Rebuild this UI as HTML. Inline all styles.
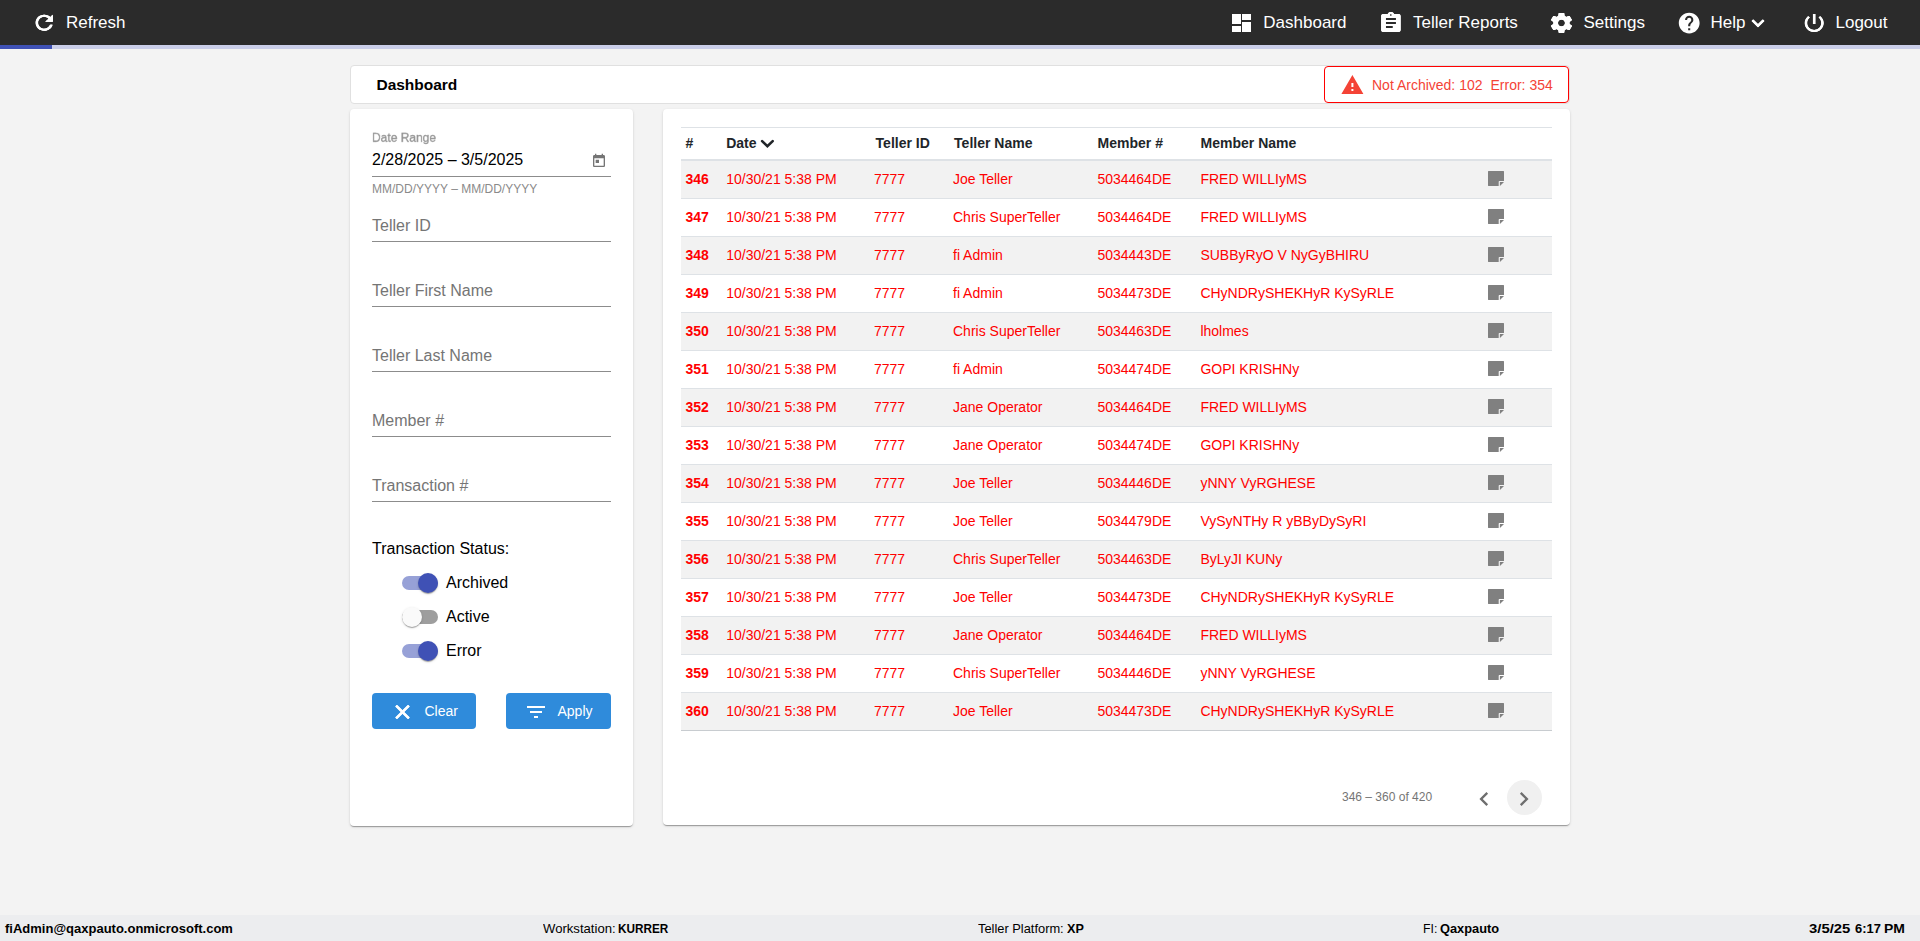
<!DOCTYPE html>
<html>
<head>
<meta charset="utf-8">
<title>Dashboard</title>
<style>
*{box-sizing:border-box;margin:0;padding:0}
html,body{width:1920px;height:941px;overflow:hidden;background:#f3f3f3;font-family:"Liberation Sans",sans-serif;color:#000}
.abs{position:absolute}
.t{position:absolute;white-space:nowrap;line-height:1}
#topbar{left:0;top:0;width:1920px;height:45px;background:#2b2b2b}
#prog{left:0;top:45px;width:1920px;height:4px;background:#cacee9}
#prog i{display:block;width:52px;height:4px;background:#3f51b5}
.nv{color:#fff;font-size:17px;top:14px}
#titlecard{left:350px;top:65px;width:1220px;height:39px;background:#fff;border:1px solid #e0e0e0;border-radius:4px}
#alert{left:1324px;top:66px;width:245px;height:37px;border:1px solid #f00;border-radius:4px;background:#fff}
.card{background:#fff;border-radius:4px;box-shadow:0 2px 1px -1px rgba(0,0,0,.2),0 1px 1px 0 rgba(0,0,0,.14),0 1px 3px 0 rgba(0,0,0,.12)}
#left{left:350px;top:109px;width:283px;height:717px}
#right{left:663px;top:109px;width:907px;height:716px}
.ul{position:absolute;left:372px;width:239px;height:1px;background:#8c8c8c}
.ph{color:#757575;font-size:16px;left:372px}
.trk{position:absolute;left:402px;width:36px;height:14px;border-radius:7px}
.thm{position:absolute;width:20px;height:20px;border-radius:50%;box-shadow:0 2px 1px -1px rgba(0,0,0,.2),0 1px 1px 0 rgba(0,0,0,.14),0 1px 3px 0 rgba(0,0,0,.12)}
.sl{font-size:16px;left:446px;color:#000}
.btn{position:absolute;top:693px;height:36px;border-radius:4px;background:#2f8bdb}
.bt{color:#fff;font-size:14px;top:704px}
.hl{position:absolute;left:681px;width:871px;background:#dee2e6}
.rb{position:absolute;left:681px;width:871px;height:37px;background:#f2f2f2}
.th{font-weight:bold;font-size:14px;color:#212529;top:136px}
.td{font-size:14px;color:#f00}
.td b{font-weight:bold}
#footer{left:0;top:915px;width:1920px;height:26px;background:#ecedef}
.ft{font-size:13px;top:922px;color:#000}
.ft b{font-weight:bold}
</style>
</head>
<body>
<div id="topbar" class="abs"></div>
<div id="prog" class="abs"><i></i></div>

<svg class="abs" style="left:31px;top:10px;overflow:visible" width="25.44" height="24" viewBox="0 0 24 24" preserveAspectRatio="none" fill="#fff"><g transform="translate(0.5 0.85)"><path d="M17.65 6.35C16.2 4.9 14.21 4 12 4c-4.42 0-7.99 3.58-7.99 8s3.57 8 7.99 8c3.73 0 6.84-2.55 7.73-6h-2.08c-.82 2.33-3.04 4-5.65 4-3.31 0-6-2.69-6-6s2.69-6 6-6c1.66 0 3.14.69 4.22 1.78L13 11h7V4l-2.35 2.35z"/><path transform="translate(-0.25 0)" d="M17.65 6.35C16.2 4.9 14.21 4 12 4c-4.42 0-7.99 3.58-7.99 8s3.57 8 7.99 8c3.73 0 6.84-2.55 7.73-6h-2.08c-.82 2.33-3.04 4-5.65 4-3.31 0-6-2.69-6-6s2.69-6 6-6c1.66 0 3.14.69 4.22 1.78L13 11h7V4l-2.35 2.35z"/><path transform="translate(0.25 0)" d="M17.65 6.35C16.2 4.9 14.21 4 12 4c-4.42 0-7.99 3.58-7.99 8s3.57 8 7.99 8c3.73 0 6.84-2.55 7.73-6h-2.08c-.82 2.33-3.04 4-5.65 4-3.31 0-6-2.69-6-6s2.69-6 6-6c1.66 0 3.14.69 4.22 1.78L13 11h7V4l-2.35 2.35z"/></g></svg>
<span class="t nv" style="left:66px">Refresh</span>
<svg class="abs" style="left:1229px;top:11px;overflow:visible" width="24" height="24" viewBox="0 0 24 24" fill="#fff"><g transform="translate(0.5 0.0)"><path d="M3 13h8V3H3v10zm0 8h8v-6H3v6zm10 0h8V11h-8v10zm0-18v6h8V3h-8z"/><path transform="translate(-0.5 0)" d="M3 13h8V3H3v10zm0 8h8v-6H3v6zm10 0h8V11h-8v10zm0-18v6h8V3h-8z"/><path transform="translate(0.5 0)" d="M3 13h8V3H3v10zm0 8h8v-6H3v6zm10 0h8V11h-8v10zm0-18v6h8V3h-8z"/></g></svg>
<span class="t nv" style="left:1263.3px">Dashboard</span>
<svg class="abs" style="left:1378px;top:10px;overflow:visible" width="25.44" height="24" viewBox="0 0 24 24" preserveAspectRatio="none" fill="#fff"><g transform="translate(0.17 0.95)"><path d="M19 3h-4.18C14.4 1.84 13.3 1 12 1c-1.3 0-2.4.84-2.82 2H5c-1.1 0-2 .9-2 2v14c0 1.1.9 2 2 2h14c1.1 0 2-.9 2-2V5c0-1.1-.9-2-2-2zm-7 0c.55 0 1 .45 1 1s-.45 1-1 1-1-.45-1-1 .45-1 1-1zm2 14H7v-2h7v2zm3-4H7v-2h10v2zm0-4H7V7h10v2z"/><path transform="translate(-0.25 0)" d="M19 3h-4.18C14.4 1.84 13.3 1 12 1c-1.3 0-2.4.84-2.82 2H5c-1.1 0-2 .9-2 2v14c0 1.1.9 2 2 2h14c1.1 0 2-.9 2-2V5c0-1.1-.9-2-2-2zm-7 0c.55 0 1 .45 1 1s-.45 1-1 1-1-.45-1-1 .45-1 1-1zm2 14H7v-2h7v2zm3-4H7v-2h10v2zm0-4H7V7h10v2z"/><path transform="translate(0.25 0)" d="M19 3h-4.18C14.4 1.84 13.3 1 12 1c-1.3 0-2.4.84-2.82 2H5c-1.1 0-2 .9-2 2v14c0 1.1.9 2 2 2h14c1.1 0 2-.9 2-2V5c0-1.1-.9-2-2-2zm-7 0c.55 0 1 .45 1 1s-.45 1-1 1-1-.45-1-1 .45-1 1-1zm2 14H7v-2h7v2zm3-4H7v-2h10v2zm0-4H7V7h10v2z"/></g></svg>
<span class="t nv" style="left:1413px">Teller Reports</span>
<svg class="abs" style="left:1548px;top:10px;overflow:visible" width="25.44" height="24" viewBox="0 0 24 24" preserveAspectRatio="none" fill="#fff"><g transform="translate(0.698 0.95)"><path d="M19.43 12.98c.04-.32.07-.64.07-.98s-.03-.66-.07-.98l2.11-1.65c.19-.15.24-.42.12-.64l-2-3.46c-.12-.22-.39-.3-.61-.22l-2.49 1c-.52-.4-1.08-.73-1.69-.98l-.38-2.65C14.46 2.18 14.25 2 14 2h-4c-.25 0-.46.18-.49.42l-.38 2.65c-.61.25-1.17.59-1.69.98l-2.49-1c-.23-.09-.49 0-.61.22l-2 3.46c-.13.22-.07.49.12.64l2.11 1.65c-.04.32-.07.65-.07.98s.03.66.07.98l-2.11 1.65c-.19.15-.24.42-.12.64l2 3.46c.12.22.39.3.61.22l2.49-1c.52.4 1.08.73 1.69.98l.38 2.65c.03.24.24.42.49.42h4c.25 0 .46-.18.49-.42l.38-2.65c.61-.25 1.17-.59 1.69-.98l2.49 1c.23.09.49 0 .61-.22l2-3.46c.12-.22.07-.49-.12-.64l-2.11-1.65zM12 15.5c-1.93 0-3.5-1.57-3.5-3.5s1.57-3.5 3.5-3.5 3.5 1.57 3.5 3.5-1.57 3.5-3.5 3.5z"/><path transform="translate(-0.25 0)" d="M19.43 12.98c.04-.32.07-.64.07-.98s-.03-.66-.07-.98l2.11-1.65c.19-.15.24-.42.12-.64l-2-3.46c-.12-.22-.39-.3-.61-.22l-2.49 1c-.52-.4-1.08-.73-1.69-.98l-.38-2.65C14.46 2.18 14.25 2 14 2h-4c-.25 0-.46.18-.49.42l-.38 2.65c-.61.25-1.17.59-1.69.98l-2.49-1c-.23-.09-.49 0-.61.22l-2 3.46c-.13.22-.07.49.12.64l2.11 1.65c-.04.32-.07.65-.07.98s.03.66.07.98l-2.11 1.65c-.19.15-.24.42-.12.64l2 3.46c.12.22.39.3.61.22l2.49-1c.52.4 1.08.73 1.69.98l.38 2.65c.03.24.24.42.49.42h4c.25 0 .46-.18.49-.42l.38-2.65c.61-.25 1.17-.59 1.69-.98l2.49 1c.23.09.49 0 .61-.22l2-3.46c.12-.22.07-.49-.12-.64l-2.11-1.65zM12 15.5c-1.93 0-3.5-1.57-3.5-3.5s1.57-3.5 3.5-3.5 3.5 1.57 3.5 3.5-1.57 3.5-3.5 3.5z"/><path transform="translate(0.25 0)" d="M19.43 12.98c.04-.32.07-.64.07-.98s-.03-.66-.07-.98l2.11-1.65c.19-.15.24-.42.12-.64l-2-3.46c-.12-.22-.39-.3-.61-.22l-2.49 1c-.52-.4-1.08-.73-1.69-.98l-.38-2.65C14.46 2.18 14.25 2 14 2h-4c-.25 0-.46.18-.49.42l-.38 2.65c-.61.25-1.17.59-1.69.98l-2.49-1c-.23-.09-.49 0-.61.22l-2 3.46c-.13.22-.07.49.12.64l2.11 1.65c-.04.32-.07.65-.07.98s.03.66.07.98l-2.11 1.65c-.19.15-.24.42-.12.64l2 3.46c.12.22.39.3.61.22l2.49-1c.52.4 1.08.73 1.69.98l.38 2.65c.03.24.24.42.49.42h4c.25 0 .46-.18.49-.42l.38-2.65c.61-.25 1.17-.59 1.69-.98l2.49 1c.23.09.49 0 .61-.22l2-3.46c.12-.22.07-.49-.12-.64l-2.11-1.65zM12 15.5c-1.93 0-3.5-1.57-3.5-3.5s1.57-3.5 3.5-3.5 3.5 1.57 3.5 3.5-1.57 3.5-3.5 3.5z"/></g></svg>
<span class="t nv" style="left:1583.5px">Settings</span>
<svg class="abs" style="left:1676px;top:10px;overflow:visible" width="25" height="25" viewBox="0 0 24 24" fill="#fff"><g transform="translate(0.672 0.528)"><path d="M12 2C6.48 2 2 6.48 2 12s4.48 10 10 10 10-4.48 10-10S17.52 2 12 2zm1 17h-2v-2h2v2zm2.07-7.75l-.9.92C13.45 12.9 13 13.5 13 15h-2v-.5c0-1.1.45-2.1 1.17-2.83l1.24-1.26c.37-.36.59-.86.59-1.41 0-1.1-.9-2-2-2s-2 .9-2 2H8c0-2.21 1.79-4 4-4s4 1.79 4 4c0 .88-.36 1.68-.93 2.25z"/></g></svg>
<span class="t nv" style="left:1710.5px">Help</span>
<svg class="abs" style="left:1801px;top:11px;overflow:visible" width="24.72" height="24" viewBox="0 0 24 24" preserveAspectRatio="none" fill="#fff"><g transform="translate(0.816 0.0)"><path d="M13 3h-2v10h2V3zm4.83 2.170l-1.42 1.42C17.99 7.86 19 9.81 19 12c0 3.87-3.13 7-7 7s-7-3.13-7-7c0-2.190 1.010-4.140 2.580-5.420L6.170 5.170C4.230 6.820 3 9.260 3 12c0 4.970 4.030 9 9 9s9-4.030 9-9c0-2.740-1.230-5.180-3.170-6.830z"/><path transform="translate(-0.25 0)" d="M13 3h-2v10h2V3zm4.83 2.170l-1.42 1.42C17.99 7.86 19 9.81 19 12c0 3.87-3.13 7-7 7s-7-3.13-7-7c0-2.190 1.010-4.140 2.580-5.420L6.170 5.170C4.230 6.820 3 9.260 3 12c0 4.970 4.030 9 9 9s9-4.030 9-9c0-2.740-1.230-5.180-3.170-6.830z"/><path transform="translate(0.25 0)" d="M13 3h-2v10h2V3zm4.83 2.170l-1.42 1.42C17.99 7.86 19 9.81 19 12c0 3.87-3.13 7-7 7s-7-3.13-7-7c0-2.190 1.010-4.140 2.580-5.420L6.170 5.170C4.230 6.820 3 9.260 3 12c0 4.970 4.030 9 9 9s9-4.030 9-9c0-2.740-1.230-5.180-3.170-6.830z"/></g></svg>
<span class="t nv" style="left:1835.5px">Logout</span>
<svg class="abs" style="left:1745px;top:10px;overflow:visible" width="25" height="25" viewBox="0 0 24 24" fill="#fff"><g transform="translate(0.48 0.48)"><path d="M7.41 8.59L12 13.17l4.590-4.580L18 10l-6 6-6-6 1.410-1.410z"/><path transform="translate(-0.25 0)" d="M7.41 8.59L12 13.17l4.590-4.580L18 10l-6 6-6-6 1.410-1.410z"/><path transform="translate(0.25 0)" d="M7.41 8.59L12 13.17l4.590-4.580L18 10l-6 6-6-6 1.410-1.410z"/></g></svg>
<div id="titlecard" class="abs"></div>
<span class="t" style="left:376.5px;top:77.3px;font-size:15.5px;font-weight:bold;letter-spacing:-0.02px">Dashboard</span>
<div id="alert" class="abs"></div>
<svg class="abs" style="left:1340px;top:73px;overflow:visible" width="24" height="24" viewBox="0 0 24 24" fill="#f44336"><g transform="translate(0.4 0.0)"><path d="M1 21h22L12 2 1 21zm12-3h-2v-2h2v2zm0-4h-2v-4h2v4z"/></g></svg>
<span class="t" style="left:1372px;top:78px;font-size:14px;color:#f44336">Not Archived: 102</span>
<span class="t" style="left:1490.5px;top:78px;font-size:14px;color:#f44336">Error: 354</span>
<div id="left" class="abs card"></div>
<div id="right" class="abs card"></div>
<span class="t" style="left:372px;top:132.4px;font-size:16px;color:#939393;transform-origin:0 0;transform:scale(.75);will-change:transform;-webkit-text-stroke:.35px #939393">Date Range</span>
<span class="t" style="left:372px;top:152px;font-size:16px;color:#000">2/28/2025 – 3/5/2025</span>
<svg class="abs" style="left:591px;top:153px;overflow:visible" width="16" height="16" viewBox="0 0 24 24" fill="#757575"><g><path d="M19 3h-1V1h-2v2H8V1H6v2H5c-1.110 0-1.990.9-1.990 2L3 19c0 1.100.890 2 2 2h14c1.100 0 2-.9 2-2V5c0-1.100-.9-2-2-2zm0 16H5V8h14v11zM7 10h5v5H7z"/></g></svg>
<span class="t" style="left:372px;top:183px;font-size:12px;color:#8a8a8a">MM/DD/YYYY – MM/DD/YYYY</span>
<div class="ul" style="top:176px"></div>
<div class="ul" style="top:241px"></div>
<span class="t ph" style="top:218px">Teller ID</span>
<div class="ul" style="top:306px"></div>
<span class="t ph" style="top:283px">Teller First Name</span>
<div class="ul" style="top:371px"></div>
<span class="t ph" style="top:348px">Teller Last Name</span>
<div class="ul" style="top:436px"></div>
<span class="t ph" style="top:413px">Member #</span>
<div class="ul" style="top:501px"></div>
<span class="t ph" style="top:478px">Transaction #</span>
<span class="t" style="left:372px;top:541px;font-size:16px">Transaction Status:</span>
<div class="trk" style="top:576px;background:#97a1d7"></div>
<div class="thm" style="left:418px;top:573px;background:#3f51b5"></div>
<span class="t sl" style="top:575px">Archived</span>
<div class="trk" style="top:610px;background:#9e9e9e"></div>
<div class="thm" style="left:402px;top:607px;background:#fafafa"></div>
<span class="t sl" style="top:609px">Active</span>
<div class="trk" style="top:644px;background:#97a1d7"></div>
<div class="thm" style="left:418px;top:641px;background:#3f51b5"></div>
<span class="t sl" style="top:643px">Error</span>
<div class="btn" style="left:372px;width:104px"></div>
<div class="btn" style="left:506px;width:105px"></div>
<svg class="abs" style="left:390px;top:700px;overflow:visible" width="24" height="24" viewBox="0 0 24 24" fill="#fff"><g transform="translate(0.5 0.0)"><path d="M19 6.410L17.590 5 12 10.590 6.410 5 5 6.410 10.590 12 5 17.590 6.410 19 12 13.410 17.590 19 19 17.590 13.410 12z"/><path transform="translate(-0.35 0)" d="M19 6.410L17.590 5 12 10.590 6.410 5 5 6.410 10.590 12 5 17.590 6.410 19 12 13.410 17.590 19 19 17.590 13.410 12z"/><path transform="translate(0.35 0)" d="M19 6.410L17.590 5 12 10.590 6.410 5 5 6.410 10.590 12 5 17.590 6.410 19 12 13.410 17.590 19 19 17.590 13.410 12z"/></g></svg>
<svg class="abs" style="left:524px;top:700px;overflow:visible" width="24" height="24" viewBox="0 0 24 24" fill="#fff"><g><path d="M10 18h4v-2h-4v2zM3 6v2h18V6H3zm3 7h12v-2H6v2z"/></g></svg>
<span class="t bt" style="left:424.5px">Clear</span>
<span class="t bt" style="left:557.5px">Apply</span>
<div class="hl" style="top:127px;height:1px"></div>
<div class="hl" style="top:159px;height:2px"></div>
<span class="t th" style="left:685.5px;top:136px">#</span>
<span class="t th" style="left:726.2px;top:136px">Date</span>
<span class="t th" style="left:875.6px;top:136px">Teller ID</span>
<span class="t th" style="left:954.1px;top:136px">Teller Name</span>
<span class="t th" style="left:1097.6px;top:136px">Member #</span>
<span class="t th" style="left:1200.6px;top:136px">Member Name</span>
<svg class="abs" style="left:760px;top:139px" width="15" height="10" viewBox="0 0 15 10"><path d="M2.100 2.100L7.400 7.200L12.700 2.100" fill="none" stroke="#212529" stroke-width="2.600" stroke-linecap="round" stroke-linejoin="miter"/></svg>
<div class="rb" style="top:161px"></div>
<div class="hl" style="top:198px;height:1px"></div>
<span class="t td" style="left:685.5px;top:172px"><b>346</b></span>
<span class="t td" style="left:726.2px;top:172px">10/30/21 5:38 PM</span>
<span class="t td" style="left:874px;top:172px">7777</span>
<span class="t td" style="left:953px;top:172px">Joe Teller</span>
<span class="t td" style="left:1097.4px;top:172px">5034464DE</span>
<span class="t td" style="left:1200.4px;top:172px">FRED WILLIyMS</span>
<svg class="abs" style="left:1488px;top:171px" width="16" height="15" viewBox="0 0 16 15"><path fill="#808080" d="M0.400 0h15.200a.4.4 0 0 1 .4.400V9.900h-4.500a.8.800 0 0 0-.8.800V15H0.400a.4.4 0 0 1-.4-.4V.4a.4.4 0 0 1 .4-.4z"/><path fill="#808080" d="M11.900 11H16l-4.100 4z"/></svg>
<div class="hl" style="top:236px;height:1px"></div>
<span class="t td" style="left:685.5px;top:210px"><b>347</b></span>
<span class="t td" style="left:726.2px;top:210px">10/30/21 5:38 PM</span>
<span class="t td" style="left:874px;top:210px">7777</span>
<span class="t td" style="left:953px;top:210px">Chris SuperTeller</span>
<span class="t td" style="left:1097.4px;top:210px">5034464DE</span>
<span class="t td" style="left:1200.4px;top:210px">FRED WILLIyMS</span>
<svg class="abs" style="left:1488px;top:209px" width="16" height="15" viewBox="0 0 16 15"><path fill="#808080" d="M0.400 0h15.200a.4.4 0 0 1 .4.400V9.900h-4.500a.8.800 0 0 0-.8.800V15H0.400a.4.4 0 0 1-.4-.4V.4a.4.4 0 0 1 .4-.4z"/><path fill="#808080" d="M11.900 11H16l-4.100 4z"/></svg>
<div class="rb" style="top:237px"></div>
<div class="hl" style="top:274px;height:1px"></div>
<span class="t td" style="left:685.5px;top:248px"><b>348</b></span>
<span class="t td" style="left:726.2px;top:248px">10/30/21 5:38 PM</span>
<span class="t td" style="left:874px;top:248px">7777</span>
<span class="t td" style="left:953px;top:248px">fi Admin</span>
<span class="t td" style="left:1097.4px;top:248px">5034443DE</span>
<span class="t td" style="left:1200.4px;top:248px">SUBByRyO V NyGyBHIRU</span>
<svg class="abs" style="left:1488px;top:247px" width="16" height="15" viewBox="0 0 16 15"><path fill="#808080" d="M0.400 0h15.200a.4.4 0 0 1 .4.400V9.900h-4.500a.8.800 0 0 0-.8.800V15H0.400a.4.4 0 0 1-.4-.4V.4a.4.4 0 0 1 .4-.4z"/><path fill="#808080" d="M11.900 11H16l-4.100 4z"/></svg>
<div class="hl" style="top:312px;height:1px"></div>
<span class="t td" style="left:685.5px;top:286px"><b>349</b></span>
<span class="t td" style="left:726.2px;top:286px">10/30/21 5:38 PM</span>
<span class="t td" style="left:874px;top:286px">7777</span>
<span class="t td" style="left:953px;top:286px">fi Admin</span>
<span class="t td" style="left:1097.4px;top:286px">5034473DE</span>
<span class="t td" style="left:1200.4px;top:286px">CHyNDRySHEKHyR KySyRLE</span>
<svg class="abs" style="left:1488px;top:285px" width="16" height="15" viewBox="0 0 16 15"><path fill="#808080" d="M0.400 0h15.200a.4.4 0 0 1 .4.400V9.900h-4.500a.8.800 0 0 0-.8.800V15H0.400a.4.4 0 0 1-.4-.4V.4a.4.4 0 0 1 .4-.4z"/><path fill="#808080" d="M11.900 11H16l-4.100 4z"/></svg>
<div class="rb" style="top:313px"></div>
<div class="hl" style="top:350px;height:1px"></div>
<span class="t td" style="left:685.5px;top:324px"><b>350</b></span>
<span class="t td" style="left:726.2px;top:324px">10/30/21 5:38 PM</span>
<span class="t td" style="left:874px;top:324px">7777</span>
<span class="t td" style="left:953px;top:324px">Chris SuperTeller</span>
<span class="t td" style="left:1097.4px;top:324px">5034463DE</span>
<span class="t td" style="left:1200.4px;top:324px">lholmes</span>
<svg class="abs" style="left:1488px;top:323px" width="16" height="15" viewBox="0 0 16 15"><path fill="#808080" d="M0.400 0h15.200a.4.4 0 0 1 .4.400V9.900h-4.500a.8.800 0 0 0-.8.800V15H0.400a.4.4 0 0 1-.4-.4V.4a.4.4 0 0 1 .4-.4z"/><path fill="#808080" d="M11.900 11H16l-4.100 4z"/></svg>
<div class="hl" style="top:388px;height:1px"></div>
<span class="t td" style="left:685.5px;top:362px"><b>351</b></span>
<span class="t td" style="left:726.2px;top:362px">10/30/21 5:38 PM</span>
<span class="t td" style="left:874px;top:362px">7777</span>
<span class="t td" style="left:953px;top:362px">fi Admin</span>
<span class="t td" style="left:1097.4px;top:362px">5034474DE</span>
<span class="t td" style="left:1200.4px;top:362px">GOPI KRISHNy</span>
<svg class="abs" style="left:1488px;top:361px" width="16" height="15" viewBox="0 0 16 15"><path fill="#808080" d="M0.400 0h15.200a.4.4 0 0 1 .4.400V9.900h-4.500a.8.800 0 0 0-.8.800V15H0.400a.4.4 0 0 1-.4-.4V.4a.4.4 0 0 1 .4-.4z"/><path fill="#808080" d="M11.900 11H16l-4.100 4z"/></svg>
<div class="rb" style="top:389px"></div>
<div class="hl" style="top:426px;height:1px"></div>
<span class="t td" style="left:685.5px;top:400px"><b>352</b></span>
<span class="t td" style="left:726.2px;top:400px">10/30/21 5:38 PM</span>
<span class="t td" style="left:874px;top:400px">7777</span>
<span class="t td" style="left:953px;top:400px">Jane Operator</span>
<span class="t td" style="left:1097.4px;top:400px">5034464DE</span>
<span class="t td" style="left:1200.4px;top:400px">FRED WILLIyMS</span>
<svg class="abs" style="left:1488px;top:399px" width="16" height="15" viewBox="0 0 16 15"><path fill="#808080" d="M0.400 0h15.200a.4.4 0 0 1 .4.400V9.900h-4.500a.8.800 0 0 0-.8.800V15H0.400a.4.4 0 0 1-.4-.4V.4a.4.4 0 0 1 .4-.4z"/><path fill="#808080" d="M11.900 11H16l-4.100 4z"/></svg>
<div class="hl" style="top:464px;height:1px"></div>
<span class="t td" style="left:685.5px;top:438px"><b>353</b></span>
<span class="t td" style="left:726.2px;top:438px">10/30/21 5:38 PM</span>
<span class="t td" style="left:874px;top:438px">7777</span>
<span class="t td" style="left:953px;top:438px">Jane Operator</span>
<span class="t td" style="left:1097.4px;top:438px">5034474DE</span>
<span class="t td" style="left:1200.4px;top:438px">GOPI KRISHNy</span>
<svg class="abs" style="left:1488px;top:437px" width="16" height="15" viewBox="0 0 16 15"><path fill="#808080" d="M0.400 0h15.200a.4.4 0 0 1 .4.400V9.900h-4.500a.8.800 0 0 0-.8.800V15H0.400a.4.4 0 0 1-.4-.4V.4a.4.4 0 0 1 .4-.4z"/><path fill="#808080" d="M11.900 11H16l-4.100 4z"/></svg>
<div class="rb" style="top:465px"></div>
<div class="hl" style="top:502px;height:1px"></div>
<span class="t td" style="left:685.5px;top:476px"><b>354</b></span>
<span class="t td" style="left:726.2px;top:476px">10/30/21 5:38 PM</span>
<span class="t td" style="left:874px;top:476px">7777</span>
<span class="t td" style="left:953px;top:476px">Joe Teller</span>
<span class="t td" style="left:1097.4px;top:476px">5034446DE</span>
<span class="t td" style="left:1200.4px;top:476px">yNNY VyRGHESE</span>
<svg class="abs" style="left:1488px;top:475px" width="16" height="15" viewBox="0 0 16 15"><path fill="#808080" d="M0.400 0h15.200a.4.4 0 0 1 .4.400V9.900h-4.500a.8.800 0 0 0-.8.800V15H0.400a.4.4 0 0 1-.4-.4V.4a.4.4 0 0 1 .4-.4z"/><path fill="#808080" d="M11.900 11H16l-4.100 4z"/></svg>
<div class="hl" style="top:540px;height:1px"></div>
<span class="t td" style="left:685.5px;top:514px"><b>355</b></span>
<span class="t td" style="left:726.2px;top:514px">10/30/21 5:38 PM</span>
<span class="t td" style="left:874px;top:514px">7777</span>
<span class="t td" style="left:953px;top:514px">Joe Teller</span>
<span class="t td" style="left:1097.4px;top:514px">5034479DE</span>
<span class="t td" style="left:1200.4px;top:514px">VySyNTHy R yBByDySyRI</span>
<svg class="abs" style="left:1488px;top:513px" width="16" height="15" viewBox="0 0 16 15"><path fill="#808080" d="M0.400 0h15.200a.4.4 0 0 1 .4.400V9.900h-4.500a.8.800 0 0 0-.8.800V15H0.400a.4.4 0 0 1-.4-.4V.4a.4.4 0 0 1 .4-.4z"/><path fill="#808080" d="M11.900 11H16l-4.100 4z"/></svg>
<div class="rb" style="top:541px"></div>
<div class="hl" style="top:578px;height:1px"></div>
<span class="t td" style="left:685.5px;top:552px"><b>356</b></span>
<span class="t td" style="left:726.2px;top:552px">10/30/21 5:38 PM</span>
<span class="t td" style="left:874px;top:552px">7777</span>
<span class="t td" style="left:953px;top:552px">Chris SuperTeller</span>
<span class="t td" style="left:1097.4px;top:552px">5034463DE</span>
<span class="t td" style="left:1200.4px;top:552px">ByLyJI KUNy</span>
<svg class="abs" style="left:1488px;top:551px" width="16" height="15" viewBox="0 0 16 15"><path fill="#808080" d="M0.400 0h15.200a.4.4 0 0 1 .4.400V9.900h-4.500a.8.800 0 0 0-.8.800V15H0.400a.4.4 0 0 1-.4-.4V.4a.4.4 0 0 1 .4-.4z"/><path fill="#808080" d="M11.900 11H16l-4.100 4z"/></svg>
<div class="hl" style="top:616px;height:1px"></div>
<span class="t td" style="left:685.5px;top:590px"><b>357</b></span>
<span class="t td" style="left:726.2px;top:590px">10/30/21 5:38 PM</span>
<span class="t td" style="left:874px;top:590px">7777</span>
<span class="t td" style="left:953px;top:590px">Joe Teller</span>
<span class="t td" style="left:1097.4px;top:590px">5034473DE</span>
<span class="t td" style="left:1200.4px;top:590px">CHyNDRySHEKHyR KySyRLE</span>
<svg class="abs" style="left:1488px;top:589px" width="16" height="15" viewBox="0 0 16 15"><path fill="#808080" d="M0.400 0h15.200a.4.4 0 0 1 .4.400V9.900h-4.500a.8.800 0 0 0-.8.800V15H0.400a.4.4 0 0 1-.4-.4V.4a.4.4 0 0 1 .4-.4z"/><path fill="#808080" d="M11.900 11H16l-4.100 4z"/></svg>
<div class="rb" style="top:617px"></div>
<div class="hl" style="top:654px;height:1px"></div>
<span class="t td" style="left:685.5px;top:628px"><b>358</b></span>
<span class="t td" style="left:726.2px;top:628px">10/30/21 5:38 PM</span>
<span class="t td" style="left:874px;top:628px">7777</span>
<span class="t td" style="left:953px;top:628px">Jane Operator</span>
<span class="t td" style="left:1097.4px;top:628px">5034464DE</span>
<span class="t td" style="left:1200.4px;top:628px">FRED WILLIyMS</span>
<svg class="abs" style="left:1488px;top:627px" width="16" height="15" viewBox="0 0 16 15"><path fill="#808080" d="M0.400 0h15.200a.4.4 0 0 1 .4.400V9.900h-4.500a.8.800 0 0 0-.8.800V15H0.400a.4.4 0 0 1-.4-.4V.4a.4.4 0 0 1 .4-.4z"/><path fill="#808080" d="M11.900 11H16l-4.100 4z"/></svg>
<div class="hl" style="top:692px;height:1px"></div>
<span class="t td" style="left:685.5px;top:666px"><b>359</b></span>
<span class="t td" style="left:726.2px;top:666px">10/30/21 5:38 PM</span>
<span class="t td" style="left:874px;top:666px">7777</span>
<span class="t td" style="left:953px;top:666px">Chris SuperTeller</span>
<span class="t td" style="left:1097.4px;top:666px">5034446DE</span>
<span class="t td" style="left:1200.4px;top:666px">yNNY VyRGHESE</span>
<svg class="abs" style="left:1488px;top:665px" width="16" height="15" viewBox="0 0 16 15"><path fill="#808080" d="M0.400 0h15.200a.4.4 0 0 1 .4.400V9.900h-4.500a.8.800 0 0 0-.8.800V15H0.400a.4.4 0 0 1-.4-.4V.4a.4.4 0 0 1 .4-.4z"/><path fill="#808080" d="M11.900 11H16l-4.100 4z"/></svg>
<div class="rb" style="top:693px"></div>
<div class="hl" style="top:730px;height:1px;background:#c8ccd0"></div>
<span class="t td" style="left:685.5px;top:704px"><b>360</b></span>
<span class="t td" style="left:726.2px;top:704px">10/30/21 5:38 PM</span>
<span class="t td" style="left:874px;top:704px">7777</span>
<span class="t td" style="left:953px;top:704px">Joe Teller</span>
<span class="t td" style="left:1097.4px;top:704px">5034473DE</span>
<span class="t td" style="left:1200.4px;top:704px">CHyNDRySHEKHyR KySyRLE</span>
<svg class="abs" style="left:1488px;top:703px" width="16" height="15" viewBox="0 0 16 15"><path fill="#808080" d="M0.400 0h15.200a.4.4 0 0 1 .4.400V9.900h-4.500a.8.800 0 0 0-.8.800V15H0.400a.4.4 0 0 1-.4-.4V.4a.4.4 0 0 1 .4-.4z"/><path fill="#808080" d="M11.900 11H16l-4.100 4z"/></svg>
<span class="t" style="left:1342px;top:791px;font-size:12px;color:#757575">346 – 360 of 420</span>
<div class="abs" style="left:1507px;top:780px;width:35px;height:35px;border-radius:50%;background:#f0f0f0"></div>
<svg class="abs" style="left:1470px;top:785px;overflow:visible" width="28" height="28" viewBox="0 0 24 24" fill="#6e6e6e"><g transform="translate(0.086 0.0)"><path d="M15.410 7.410L14 6l-6 6 6 6 1.410-1.410L10.830 12z"/></g></svg>
<svg class="abs" style="left:1509px;top:785px;overflow:visible" width="28" height="28" viewBox="0 0 24 24" fill="#6e6e6e"><g transform="translate(0.771 0.0)"><path d="M10 6L8.590 7.410 13.170 12l-4.580 4.590L10 18l6-6z"/></g></svg>
<div id="footer" class="abs"></div>
<span class="t ft" style="left:5.0px;font-weight:bold;transform-origin:0 0;transform:scaleX(1)">fiAdmin@qaxpauto.onmicrosoft.com</span>
<span class="t ft" style="left:542.7px;transform-origin:0 0;transform:scaleX(1.0085)">Workstation:</span>
<span class="t ft" style="left:618.1px;font-weight:bold;transform-origin:0 0;transform:scaleX(0.9056)">KURRER</span>
<span class="t ft" style="left:978.3px;transform-origin:0 0;transform:scaleX(0.9884)">Teller Platform:</span>
<span class="t ft" style="left:1067.3px;font-weight:bold;transform-origin:0 0;transform:scaleX(0.9676)">XP</span>
<span class="t ft" style="left:1423.25px;transform-origin:0 0;transform:scaleX(0.9462)">FI:</span>
<span class="t ft" style="left:1440.2px;font-weight:bold;transform-origin:0 0;transform:scaleX(0.985)">Qaxpauto</span>
<span class="t ft" style="left:1809.16px;font-weight:bold;transform-origin:0 0;transform:scaleX(1.1429)">3/5/25</span>
<span class="t ft" style="left:1855.3px;font-weight:bold;transform-origin:0 0;transform:scaleX(0.9923)">6:17</span>
<span class="t ft" style="left:1884.43px;font-weight:bold;transform-origin:0 0;transform:scaleX(1.0722)">PM</span>
</body>
</html>
